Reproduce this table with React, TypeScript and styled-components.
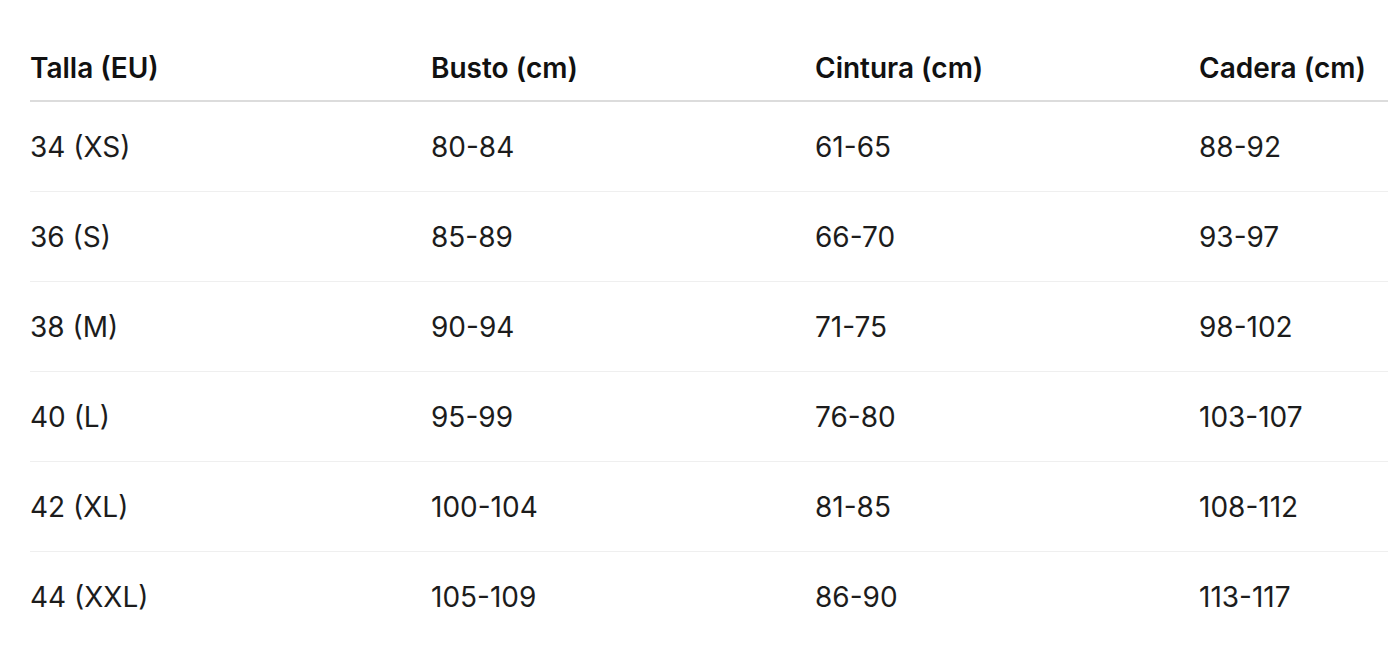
import styled, { createGlobalStyle } from "styled-components";

const GlobalStyle = createGlobalStyle`
  html, body {
    margin: 0;
    padding: 0;
    background: #ffffff;
  }
  body {
    font-family: Inter, "Noto Sans", sans-serif;
    color: #1d1d1f;
  }
`;

type Row = {
  size: string;
  bust: string;
  waist: string;
  hip: string;
};

const rows: Row[] = [
  { size: "34 (XS)", bust: "80-84", waist: "61-65", hip: "88-92" },
  { size: "36 (S)", bust: "85-89", waist: "66-70", hip: "93-97" },
  { size: "38 (M)", bust: "90-94", waist: "71-75", hip: "98-102" },
  { size: "40 (L)", bust: "95-99", waist: "76-80", hip: "103-107" },
  { size: "42 (XL)", bust: "100-104", waist: "81-85", hip: "108-112" },
  { size: "44 (XXL)", bust: "105-109", waist: "86-90", hip: "113-117" },
];

const Page = styled.div`
  padding: 36px 0 25px 30px;
`;

const Table = styled.table`
  width: 1358px;
  border-collapse: collapse;
  table-layout: fixed;
  font-size: 28px;
  line-height: 36px;
`;

const Col = styled.col<{ $width: number }>`
  width: ${(p) => p.$width}px;
`;

const HeadCell = styled.th`
  padding: 14px 0;
  text-align: left;
  font-weight: 600;
  color: #111111;
  white-space: nowrap;
  border-bottom: 2px solid #dcdcdc;
`;

const BodyRow = styled.tr`
  &:not(:last-child) td {
    border-bottom: 1px solid #efefef;
  }
`;

const Cell = styled.td`
  padding: 27px 0 26px;
  font-weight: 400;
  color: #1c1c1c;
  white-space: nowrap;
`;

export default function App() {
  return (
    <Page>
      <GlobalStyle />
      <Table>
        <colgroup>
          <Col $width={401} />
          <Col $width={384} />
          <Col $width={384} />
          <Col $width={189} />
        </colgroup>
        <thead>
          <tr>
            <HeadCell>Talla (EU)</HeadCell>
            <HeadCell>Busto (cm)</HeadCell>
            <HeadCell>Cintura (cm)</HeadCell>
            <HeadCell>Cadera (cm)</HeadCell>
          </tr>
        </thead>
        <tbody>
          {rows.map((r) => (
            <BodyRow key={r.size}>
              <Cell>{r.size}</Cell>
              <Cell>{r.bust}</Cell>
              <Cell>{r.waist}</Cell>
              <Cell>{r.hip}</Cell>
            </BodyRow>
          ))}
        </tbody>
      </Table>
    </Page>
  );
}
